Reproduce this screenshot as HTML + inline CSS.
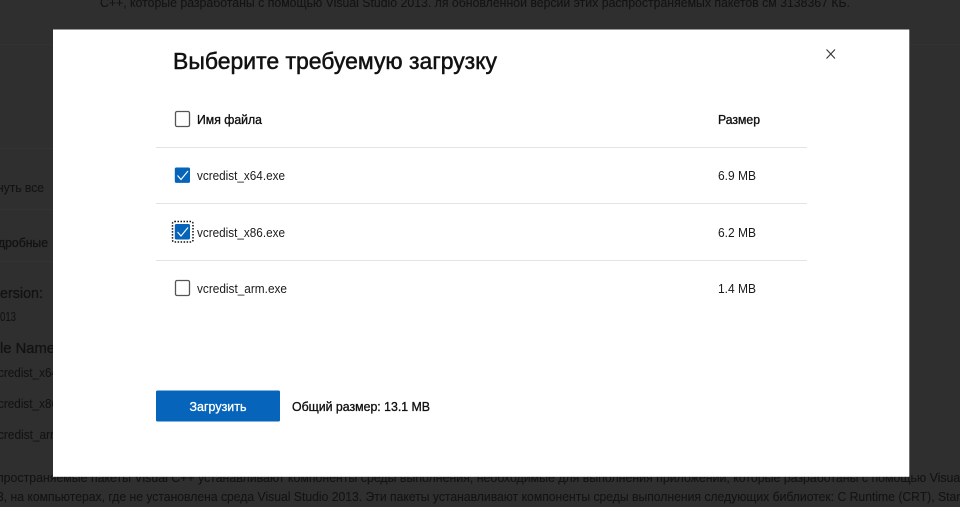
<!DOCTYPE html>
<html lang="ru"><head><meta charset="utf-8"><title>Загрузка</title>
<style>
html,body{margin:0;padding:0;width:960px;height:507px;overflow:hidden;background:#2f2f2f}
body{position:relative;font-family:"Liberation Sans","Noto Sans CJK SC",sans-serif}
svg{position:absolute;left:0;top:0}
text{font-family:"Liberation Sans",sans-serif;white-space:pre}
.bg{fill:#131313;font-size:13px;stroke:#131313;stroke-width:.1}
.bb{fill:#131313;font-size:13px;stroke:#131313;stroke-width:.35}
.t{fill:#1a1a1a;font-size:13px}
.s{fill:#111;stroke:#111;stroke-width:.35;font-size:13px}
</style></head>
<body>
<svg width="960" height="507" viewBox="0 0 960 507" xmlns="http://www.w3.org/2000/svg">
<rect width="960" height="507" fill="#2f2f2f"/>
<rect x="0" y="44" width="960" height="1" fill="#323232"/>
<rect x="0" y="148" width="53" height="1" fill="#333"/>
<rect x="0" y="209" width="53" height="1" fill="#333"/>
<rect x="0" y="261" width="53" height="1" fill="#333"/>
<text class="bg" x="100" y="7" textLength="750" lengthAdjust="spacingAndGlyphs">C++, которые разработаны с помощью Visual Studio 2013. ля обновленной версии этих распространяемых пакетов см 3138367 КБ.</text>
<text class="bg" x="-3" y="192" textLength="47" lengthAdjust="spacingAndGlyphs">нуть все</text>
<text class="bb" x="-2" y="247" textLength="50" lengthAdjust="spacingAndGlyphs">дробные</text>
<text class="bb" style="font-size:15px" x="0" y="298" textLength="43" lengthAdjust="spacingAndGlyphs">ersion:</text>
<text class="bg" x="0" y="321" textLength="16" lengthAdjust="spacingAndGlyphs">013</text>
<text class="bb" style="font-size:15px" x="0" y="353" textLength="55" lengthAdjust="spacingAndGlyphs">le Name</text>
<text class="bg" x="-2" y="377" textLength="60" lengthAdjust="spacingAndGlyphs">credist_x64</text>
<text class="bg" x="-2" y="408" textLength="60" lengthAdjust="spacingAndGlyphs">credist_x86</text>
<text class="bg" x="-2" y="439" textLength="62" lengthAdjust="spacingAndGlyphs">credist_arm</text>
<text class="bg" x="-3" y="482" textLength="966" lengthAdjust="spacingAndGlyphs">пространяемые пакеты Visual C++ устанавливают компоненты среды выполнения, необходимые для выполнения приложений, которые разработаны с помощью Visual</text>
<text class="bg" x="-3" y="501" textLength="966" lengthAdjust="spacingAndGlyphs">3, на компьютерах, где не установлена среда Visual Studio 2013. Эти пакеты устанавливают компоненты среды выполнения следующих библиотек: C Runtime (CRT), Stan</text>

<rect x="53" y="29.500" width="856.300" height="447.300" fill="#fff"/>
<text x="173" y="69" fill="#111" font-size="23" textLength="324" lengthAdjust="spacingAndGlyphs" stroke="#111" stroke-width=".5">Выберите требуемую загрузку</text>

<rect x="175.500" y="111.500" width="14" height="15" rx="1.500" fill="#fff" stroke="#555" stroke-width="1.300"/>
<text class="s" x="197" y="124" textLength="65" lengthAdjust="spacingAndGlyphs">Имя файла</text>
<text class="s" x="718" y="124" textLength="42" lengthAdjust="spacingAndGlyphs">Размер</text>
<rect x="156" y="147" width="651" height="1" fill="#e3e3e3"/>

<rect x="174.800" y="167.500" width="15.200" height="15.400" rx="1.500" fill="#0665ba"/>
<path d="M177.500 175.500L181 179.500L188 171" fill="none" stroke="#fff" stroke-width="1.100"/>
<text class="t" x="197" y="180" textLength="88" lengthAdjust="spacingAndGlyphs">vcredist_x64.exe</text>
<text class="t" x="718" y="180" textLength="38" lengthAdjust="spacingAndGlyphs">6.9 MB</text>
<rect x="156" y="203" width="651" height="1" fill="#e3e3e3"/>

<rect x="172.500" y="221.500" width="20.500" height="20.500" rx="2" fill="none" stroke="#111" stroke-width="1.500" stroke-dasharray="1.500 1.500"/>
<rect x="174.800" y="224" width="15.200" height="15.500" rx="1.500" fill="#0665ba"/>
<path d="M177.500 232L181 236L188 227.500" fill="none" stroke="#fff" stroke-width="1.100"/>
<text class="t" x="197" y="237" textLength="88" lengthAdjust="spacingAndGlyphs">vcredist_x86.exe</text>
<text class="t" x="718" y="237" textLength="38" lengthAdjust="spacingAndGlyphs">6.2 MB</text>
<rect x="156" y="260" width="651" height="1" fill="#e3e3e3"/>

<rect x="175.500" y="280.500" width="14" height="15" rx="1.500" fill="#fff" stroke="#555" stroke-width="1.300"/>
<text class="t" x="197" y="293" textLength="90" lengthAdjust="spacingAndGlyphs">vcredist_arm.exe</text>
<text class="t" x="718" y="293" textLength="38" lengthAdjust="spacingAndGlyphs">1.4 MB</text>

<path d="M826.500 49.500L835 58.500M835 49.500L826.500 58.500" fill="none" stroke="#333" stroke-width="1.100"/>

<rect x="156" y="390.500" width="124" height="31" rx="1.500" fill="#0665ba"/>
<text x="189.500" y="411" fill="#fff" stroke="#fff" stroke-width=".3" font-size="13" textLength="57" lengthAdjust="spacingAndGlyphs">Загрузить</text>
<text class="s" x="292" y="411" textLength="138" lengthAdjust="spacingAndGlyphs">Общий размер: 13.1 MB</text>
</svg>
</body></html>
